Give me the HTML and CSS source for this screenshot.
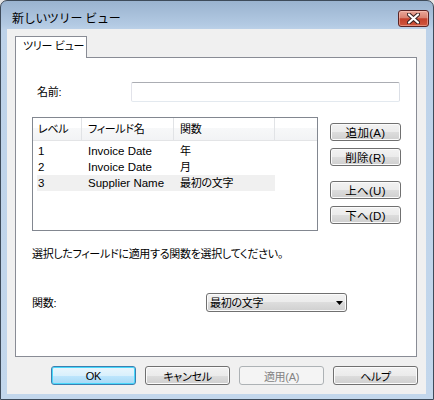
FILE: index.html
```html
<!DOCTYPE html>
<html lang="ja">
<head>
<meta charset="utf-8">
<title>新しいツリー ビュー</title>
<link rel="stylesheet" href="styles.css">
</head>
<body>
<div class="window">
  <div class="titlebar">
    <span class="title">新しいツリー ビュー</span>
    <div class="close">
      <svg width="13" height="11" viewBox="0 0 13 11">
        <path d="M2 1.5 L11 9.5 M11 1.5 L2 9.5" stroke="#3a2222" stroke-width="4.2" stroke-linecap="round" fill="none"/>
        <path d="M2 1.5 L11 9.5 M11 1.5 L2 9.5" stroke="#ffffff" stroke-width="2.2" stroke-linecap="round" fill="none"/>
      </svg>
    </div>
  </div>
  <div class="client">
    <div class="tabs"><div class="tab">ツリー ビュー</div></div>
    <div class="panel">
      <div class="name-row">
        <span class="name-label">名前:</span>
        <div class="textbox"></div>
      </div>
      <div class="list-row">
        <div class="list">
          <div class="lhead">
            <div class="hc hc1">レベル</div>
            <div class="hc">フィールド名</div>
            <div class="hc">関数</div>
            <div class="hc hc4"></div>
          </div>
          <div class="rows">
            <div class="lrow"><span class="rc1">1</span><span class="rc lat">Invoice Date</span><span class="rc">年</span></div>
            <div class="lrow"><span class="rc1">2</span><span class="rc lat">Invoice Date</span><span class="rc">月</span></div>
            <div class="lrow sel"><span class="rc1">3</span><span class="rc lat">Supplier Name</span><span class="rc">最初の文字</span></div>
          </div>
        </div>
        <div class="side">
          <div class="btn side-btn">追加(A)</div>
          <div class="btn side-btn">削除(R)</div>
          <div class="btn side-btn group">上へ(U)</div>
          <div class="btn side-btn">下へ(D)</div>
        </div>
      </div>
      <p class="hint">選択したフィールドに適用する関数を選択してください。</p>
      <div class="func-row">
        <span class="func-label">関数:</span>
        <div class="combo">
          <span class="combo-text">最初の文字</span>
          <svg class="arrow" width="7" height="4" viewBox="0 0 7 4"><polygon points="0,0 7,0 3.5,4" fill="#000"/></svg>
        </div>
      </div>
    </div>
    <div class="footer">
      <div class="btn foot-btn default">OK</div>
      <div class="btn foot-btn">キャンセル</div>
      <div class="btn foot-btn disabled">適用(A)</div>
      <div class="btn foot-btn">ヘルプ</div>
    </div>
  </div>
</div>
</body>
</html>
```

FILE: styles.css
```css
* { box-sizing: border-box; }
html, body { margin: 0; padding: 0; background: #e4e4e4; }
body {
  width: 434px;
  height: 400px;
  overflow: hidden;
  font-family: "Liberation Sans", "Noto Sans CJK JP", sans-serif;
  font-size: 11px;
  letter-spacing: -0.3px;
  color: #000;
  font-feature-settings: "palt";
}
.window {
  width: 434px;
  height: 400px;
  border: 1px solid #3e4b5a;
  border-radius: 7px 7px 0 0;
  background: linear-gradient(to bottom, #9ab3cf 0px, #b3cae3 24px, #bdd2e9 29px, #c3d7ec 100%);
  padding: 0 7px 5px 6px;
  display: flex;
  flex-direction: column;
}
.titlebar {
  height: 28px;
  flex: none;
  display: flex;
  align-items: flex-start;
  justify-content: space-between;
}
.title {
  margin-top: 10px;
  margin-left: 5px;
  line-height: 16px;
  font-size: 12px;
  letter-spacing: -0.3px;
  font-feature-settings: normal;
  white-space: nowrap;
}
.close {
  margin-top: 9px;
  margin-right: -3px;
  width: 31px;
  height: 17px;
  border: 1px solid #5a2424;
  border-radius: 3px;
  background: linear-gradient(to bottom, #eaa799 0%, #d98270 45%, #c4402b 52%, #d0573e 100%);
  box-shadow: inset 0 0 0 1px rgba(255, 210, 200, 0.45);
  display: flex;
  align-items: center;
  justify-content: center;
}
.client {
  flex: 1;
  background: #f0f0f0;
  padding: 7px 9px 0 8px;
  display: flex;
  flex-direction: column;
}
.tabs {
  height: 21px;
  display: flex;
  flex: none;
}
.tab {
  position: relative;
  z-index: 1;
  width: 72px;
  height: 22px;
  border: 1px solid #898c95;
  border-bottom: 0;
  background: #fff;
  padding-left: 7px;
  line-height: 19px;
  white-space: nowrap;
}
.panel {
  width: 402px;
  height: 300px;
  flex: none;
  border: 1px solid #898c95;
  background: #fff;
  padding: 24px 0 0 16px;
}
.name-row {
  display: flex;
  align-items: center;
  height: 20px;
  padding-left: 5px;
}
.name-label { width: 94px; line-height: 16px; }
.textbox {
  width: 269px;
  height: 20px;
  border: 1px solid;
  border-color: #abadb3 #dbdfe6 #e3e9ef #e2e3ea;
  border-radius: 2px;
  background: #fff;
}
.list-row {
  margin-top: 15px;
  display: flex;
  align-items: flex-start;
}
.list {
  width: 286px;
  height: 114px;
  border: 1px solid #828790;
  background: #fff;
}
.lhead {
  display: grid;
  grid-template-columns: 49px 92px 101px 1fr;
  height: 23px;
  background: linear-gradient(to bottom, #ffffff 0%, #ffffff 45%, #f7f8f9 45%, #f2f3f5 100%);
  border-bottom: 1px solid #e3e4e6;
}
.hc {
  padding-left: 6px;
  line-height: 22px;
  border-right: 1px solid #e1e3e6;
  white-space: nowrap;
}
.hc1 { padding-left: 5px; }
.hc4 { border-right: 0; }
.rows { padding-top: 2px; }
.lrow {
  display: grid;
  grid-template-columns: 45px 92px 101px;
  width: 238px;
  height: 16px;
  margin-left: 4px;
  line-height: 16px;
}
.lrow.sel { background: #f0f0f0; }
.rc1 { padding-left: 1px; font-size: 11.5px; letter-spacing: 0; }
.rc { padding-left: 6px; white-space: nowrap; }
.lat { font-size: 11.5px; letter-spacing: 0; }
.side {
  margin-left: 12px;
  padding-top: 6px;
  display: flex;
  flex-direction: column;
  gap: 7px;
}
.btn {
  border: 1px solid #707070;
  border-radius: 3px;
  background: linear-gradient(to bottom, #f2f2f2 0%, #ebebeb 50%, #dddddd 50%, #cfcfcf 100%);
  box-shadow: inset 0 0 0 1px #fbfbfb;
  display: flex;
  align-items: center;
  justify-content: center;
  white-space: nowrap;
}
.side-btn { width: 71px; height: 18px; font-size: 11.5px; letter-spacing: 0.3px; }
.side-btn.group { margin-top: 8px; }
.hint {
  margin: 15px 0 0 0;
  line-height: 16px;
  white-space: nowrap;
}
.func-row {
  margin-top: 31px;
  display: flex;
  align-items: center;
}
.func-label { width: 174px; line-height: 16px; }
.combo {
  width: 141px;
  height: 19px;
  border: 1px solid #707070;
  border-radius: 3px;
  background: linear-gradient(to bottom, #f2f2f2 0%, #ebebeb 50%, #dddddd 50%, #cfcfcf 100%);
  box-shadow: inset 0 0 0 1px #fbfbfb;
  display: flex;
  align-items: center;
  justify-content: space-between;
  padding: 0 3px 0 3px;
}
.combo-text { line-height: 16px; }
.arrow { display: block; }
.footer {
  margin-top: 9px;
  margin-right: -1px;
  display: flex;
  justify-content: flex-end;
  gap: 9px;
}
.foot-btn { width: 85px; height: 19px; }
.foot-btn.default {
  border-color: #3c7fb1;
  background: linear-gradient(to bottom, #eaf6fd 0%, #d9f0fc 50%, #bee6fd 50%, #a7d9f5 100%);
  box-shadow: inset 0 0 0 1px #48d8fb;
}
.foot-btn.disabled {
  border-color: #adb2b5;
  background: #f4f4f4;
  box-shadow: none;
  color: #838383;
}
```
